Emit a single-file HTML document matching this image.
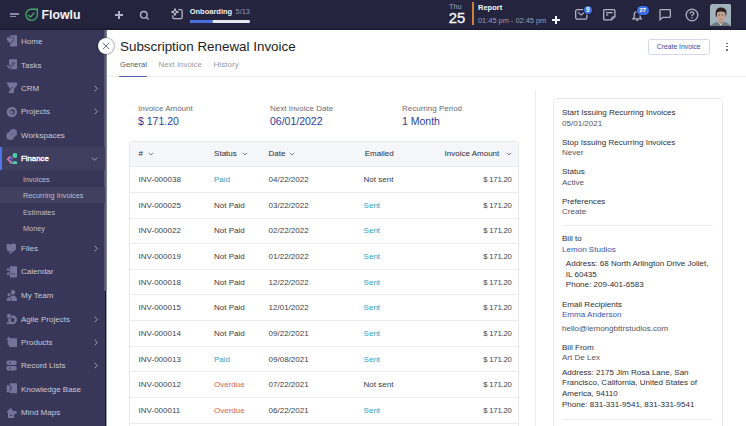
<!DOCTYPE html>
<html><head><meta charset="utf-8">
<style>
*{box-sizing:border-box;margin:0;padding:0}
html,body{width:746px;height:426px;overflow:hidden;background:#fff;font-family:"Liberation Sans",sans-serif}
.a{position:absolute;white-space:nowrap}
#top{position:absolute;left:0;top:0;width:746px;height:30px;background:linear-gradient(180deg,#24243e 0,#24243e 27.5px,#1b1b33 29px,#1b1b33 30px)}
#side{position:absolute;left:0;top:30px;width:105px;height:396px;background:#383759}
#shadow{position:absolute;left:103.5px;top:30px;width:3.5px;height:260.6px;background:linear-gradient(90deg,#4a4966,#5f5e76 30%,#64637a 70%,#b0b0bc)}
.si{position:absolute;left:0;width:105px;height:23px}
.si .t{position:absolute;left:21px;top:0;line-height:23px;font-size:8px;color:#c9c9d9}
.si .ic{position:absolute;left:6px;top:5.5px;width:11px;height:12px}
.si .ch{position:absolute;left:94px;top:8px;width:4px;height:7px}
.sub{position:absolute;left:23px;font-size:7.3px;color:#bdbdd0;line-height:16px}
.lbl{font-size:8px;color:#6b6b78}
.val{font-size:10.5px;color:#2a3e9a}
.th{font-size:8px;color:#2c2c36}
.td{font-size:8px;color:#42424c}
.rc{position:absolute;left:562px;font-size:8.05px;color:#2f2f38;white-space:nowrap;line-height:10.5px}
.rc.g{color:#555560}
.rc.b{color:#3a55b0}
</style></head><body>
<!-- TOP BAR -->
<div id="top">
  <!-- hamburger -->
  <div class="a" style="left:10px;top:13px;width:9px;height:1.6px;background:#8a89a6"></div>
  <div class="a" style="left:10px;top:15.6px;width:6px;height:1.6px;background:#8a89a6"></div>
  <!-- shield -->
  <svg class="a" style="left:25px;top:8px" width="14" height="14" viewBox="0 0 14 14">
    <path d="M12.3 1.2 V6.6 A5.7 5.7 0 0 1 6.6 12.3 A5.6 5.6 0 0 1 1 6.7 V6.4 A5.2 5.2 0 0 1 6.2 1.2 Z" fill="none" stroke="#48a866" stroke-width="1.35"/>
    <path d="M3.2 7 L5.6 9.1 L9.2 4.6" fill="none" stroke="#48a866" stroke-width="1.35"/>
  </svg>
  <div class="a" style="left:41.5px;top:7px;font-size:12.3px;font-weight:bold;color:#f4f4f8;line-height:17px">Flowlu</div>
  <!-- plus -->
  <div class="a" style="left:115px;top:14.2px;width:8px;height:1.5px;background:#b2b2c6"></div>
  <div class="a" style="left:118.2px;top:11px;width:1.5px;height:8px;background:#b2b2c6"></div>
  <!-- search -->
  <svg class="a" style="left:139px;top:10px" width="11" height="11" viewBox="0 0 11 11"><circle cx="4.8" cy="4.8" r="3.3" fill="none" stroke="#b2b2c6" stroke-width="1.4"/><path d="M7.3 7.3 L9.6 9.6" stroke="#b2b2c6" stroke-width="1.4"/></svg>
  <!-- onboarding icon -->
  <svg class="a" style="left:170px;top:8px" width="14" height="13" viewBox="0 0 14 13"><path d="M8.3 1.65 H10.9 Q12.15 1.65 12.15 2.9 V9.3 Q12.15 10.55 10.9 10.55 H4 Q2.75 10.55 2.75 9.3 V7.2" fill="none" stroke="#b4b4c8" stroke-width="1.3"/><path d="M4.95 1.2 V6.8 M2.15 4 H7.75" stroke="#b4b4c8" stroke-width="2" stroke-linecap="round"/><circle cx="4.95" cy="4" r="2.1" fill="#b4b4c8"/><circle cx="4.95" cy="4" r="0.9" fill="#24243e"/></svg>
  <div class="a" style="left:189.7px;top:6.6px;font-size:7.5px;font-weight:bold;color:#f0f0f5;line-height:10px">Onboarding</div>
  <div class="a" style="left:235.6px;top:6.6px;font-size:7.4px;color:#9a9ab4;line-height:10px">5/13</div>
  <div class="a" style="left:190px;top:20px;width:60px;height:2.5px;background:#e6e6ee;border-radius:1.25px"></div>
  <div class="a" style="left:190px;top:20px;width:23px;height:2.5px;background:#4a6ee0;border-radius:1.25px"></div>
  <!-- date -->
  <div class="a" style="left:449px;top:2px;font-size:7.4px;color:#a3a3bb;line-height:9px">Thu</div>
  <div class="a" style="left:448.8px;top:9.5px;font-size:14.8px;color:#fafafc;line-height:17px;-webkit-text-stroke:0.3px #fafafc">25</div>
  <div class="a" style="left:472px;top:2px;width:2px;height:22.5px;background:#cf7f36"></div>
  <div class="a" style="left:478px;top:2.8px;font-size:7.5px;font-weight:bold;color:#fafafc;line-height:10px">Report</div>
  <div class="a" style="left:478px;top:15.8px;font-size:7.4px;color:#9d9db6;line-height:10px">01:45 pm - 02:45 pm</div>
  <div class="a" style="left:552px;top:19.2px;width:7.5px;height:1.5px;background:#f4f4f8"></div>
  <div class="a" style="left:555px;top:16.2px;width:1.5px;height:7.5px;background:#f4f4f8"></div>
  <!-- mail -->
  <svg class="a" style="left:575px;top:9.3px" width="12.5" height="11" viewBox="0 0 12.5 11"><rect x="0.65" y="0.65" width="11.2" height="9.5" rx="1.6" fill="none" stroke="#b2b2c6" stroke-width="1.3"/><path d="M3 3.4 L6.2 5.9 L9.4 3.4" fill="none" stroke="#b2b2c6" stroke-width="1.2"/></svg>
  <div class="a" style="left:583.6px;top:5.5px;width:8.6px;height:8.6px;border-radius:50%;background:#3c6fe4;color:#fff;font-size:6.6px;font-weight:bold;text-align:center;line-height:8.6px;box-shadow:0 0 0 0.8px #1b1b31">9</div>
  <!-- notes -->
  <svg class="a" style="left:602.5px;top:9.2px" width="13" height="11.5" viewBox="0 0 13 11.5"><path d="M1.6 0.65 H10.9 Q11.9 0.65 11.9 1.6 V7.6 L8.4 10.9 H1.6 Q0.65 10.9 0.65 9.9 V1.6 Q0.65 0.65 1.6 0.65 Z" fill="none" stroke="#b2b2c6" stroke-width="1.3"/><path d="M3 3.6 H9.6 M3 5.9 H5.2" stroke="#b2b2c6" stroke-width="1.2"/><path d="M8.6 10.5 V8.7 Q8.6 7.8 9.5 7.8 H11.5" fill="none" stroke="#b2b2c6" stroke-width="1"/></svg>
  <!-- bell -->
  <svg class="a" style="left:631.5px;top:10px" width="10.5" height="11" viewBox="0 0 10.5 11"><path d="M2.2 7.8 V5 Q2.2 1.6 5.2 1.6 Q8.2 1.6 8.2 5 V7.8 L9.6 8.9 H0.8 Z" fill="none" stroke="#b2b2c6" stroke-width="1.3"/><path d="M4 10.3 H6.4" stroke="#b2b2c6" stroke-width="1.2"/></svg>
  <div class="a" style="left:636.8px;top:6px;width:12px;height:8.6px;border-radius:4.3px;background:#3c6fe4;color:#fff;font-size:6px;font-weight:bold;text-align:center;line-height:8.6px;box-shadow:0 0 0 0.8px #1b1b31">27</div>
  <!-- chat -->
  <svg class="a" style="left:658.5px;top:9px" width="12.5" height="12" viewBox="0 0 12.5 12"><path d="M1.6 0.65 H10.6 Q11.35 0.65 11.35 1.4 V7.6 Q11.35 8.35 10.6 8.35 H3.8 L1 10.8 V1.4 Q1 0.65 1.6 0.65 Z" fill="none" stroke="#b2b2c6" stroke-width="1.3"/></svg>
  <!-- help -->
  <svg class="a" style="left:685px;top:7.6px" width="14" height="14" viewBox="0 0 14 14"><circle cx="7" cy="7" r="5.8" fill="none" stroke="#b2b2c6" stroke-width="1.3"/><path d="M5.2 5.5 Q5.2 3.8 7 3.8 Q8.8 3.8 8.8 5.4 Q8.8 6.5 7 7.2 V8.3" fill="none" stroke="#b2b2c6" stroke-width="1.3"/><circle cx="7" cy="10" r="0.8" fill="#b2b2c6"/></svg>
  <!-- avatar -->
  <svg class="a" style="left:709.8px;top:3.7px" width="21.5" height="22.5" viewBox="0 0 21.5 22.5">
    <defs><clipPath id="av"><rect x="0" y="0" width="21.5" height="22.5" rx="2.5"/></clipPath></defs>
    <g clip-path="url(#av)">
    <rect width="21.5" height="22.5" fill="#a2b2bd"/>
    <path d="M1 22.5 Q2 19 7 18.2 L14.5 18.2 Q19.5 19 20.5 22.5 Z" fill="#6d7b83"/>
    <path d="M8 18 L10.8 21.5 L13.5 18 Z" fill="#e6e8ea"/>
    <path d="M8.6 15.5 H13 V18.5 L10.8 20 L8.6 18.5 Z" fill="#a4837a"/>
    <ellipse cx="10.8" cy="11.8" rx="4.3" ry="6.2" fill="#c4a291"/>
    <path d="M5.8 12.5 Q4.6 4.5 9.5 3.6 Q15 2.8 16.4 7 Q16.8 10 15.9 12.8 L15.3 8.8 Q12.5 6.8 7.2 8.2 L6.6 13 Z" fill="#2b211d"/>
    <path d="M8.3 11 H9.9 M11.7 11 H13.3" stroke="#4f3a31" stroke-width="0.8"/>
    <path d="M9.6 15.3 H12" stroke="#9a7466" stroke-width="0.6"/>
    </g>
  </svg>
</div>

<!-- SIDEBAR -->
<div id="side"></div>
<div id="shadow"></div><div class="a" style="left:104.5px;top:290.6px;width:1.6px;height:136px;background:#14142c"></div><div class="a" style="left:106px;top:290.6px;width:1px;height:136px;background:#a0a0ae"></div>
<!--SI-->
<div class="a" style="left:0;top:146.6px;width:105px;height:23.9px;background:#3f3e5e"></div>
<div class="a" style="left:0;top:146.6px;width:2px;height:23.9px;background:#4f74e8"></div>
<div class="a" style="left:0;top:187.2px;width:105px;height:15.4px;background:#41405f"></div>
<div class="si" style="top:29.8px"><svg class="ic" viewBox="0 0 11 12"><rect x="4" y="0.3" width="7" height="11.3" rx="0.8" fill="#75749a"/><path d="M0.3 4 Q0.3 1.8 2.4 1.8 Q3.6 1.8 4.4 2.8 Q5.4 1.8 6.4 2 Q8.2 2.4 7.6 4.6 Q7 6.6 4.4 8.6 Q0.3 6 0.3 4 Z" fill="#75749a" stroke="#383759" stroke-width="0.8"/></svg><div class="t" style="color:#c7c7d7;font-weight:normal">Home</div>
</div>
<div class="si" style="top:53.7px"><svg class="ic" viewBox="0 0 11 12"><rect x="3" y="0.3" width="8" height="10" rx="0.8" fill="#75749a"/><path d="M0.8 6.4 L3.2 8.8 L8.6 3.4" fill="none" stroke="#383759" stroke-width="2.6"/><path d="M0.8 6.4 L3.2 8.8 L8.6 3.4" fill="none" stroke="#75749a" stroke-width="1.3"/></svg><div class="t" style="color:#c7c7d7;font-weight:normal">Tasks</div>
</div>
<div class="si" style="top:76.7px"><svg class="ic" viewBox="0 0 11 12"><path d="M0.3 0.5 H11 V3.5 L8 7 V11 H2.5 L4 7 Z" fill="#75749a"/><path d="M2.2 9.5 L7.2 4.6" stroke="#383759" stroke-width="0.9"/></svg><div class="t" style="color:#c7c7d7;font-weight:normal">CRM</div>
<svg class="ch" viewBox="0 0 4 7"><path d="M0.7 0.7 L3.2 3.5 L0.7 6.3" fill="none" stroke="#a8a8c0" stroke-width="0.9"/></svg>
</div>
<div class="si" style="top:100.2px"><svg class="ic" viewBox="0 0 11 12"><circle cx="5.8" cy="6" r="5.2" fill="#75749a"/><circle cx="6.2" cy="5.8" r="2.6" fill="#383759"/><circle cx="5.6" cy="6.2" r="1.6" fill="#75749a"/></svg><div class="t" style="color:#c7c7d7;font-weight:normal">Projects</div>
<svg class="ch" viewBox="0 0 4 7"><path d="M0.7 0.7 L3.2 3.5 L0.7 6.3" fill="none" stroke="#a8a8c0" stroke-width="0.9"/></svg>
</div>
<div class="si" style="top:123.9px"><svg class="ic" viewBox="0 0 11 12"><circle cx="4.2" cy="7" r="3.9" fill="#75749a"/><circle cx="7.2" cy="4" r="3.9" fill="#75749a" opacity="0.9"/><rect x="5" y="4.8" width="1.4" height="1.4" fill="#383759" opacity="0.6"/></svg><div class="t" style="color:#c7c7d7;font-weight:normal">Workspaces</div>
</div>
<div class="si" style="top:147.3px"><svg class="ic" viewBox="0 0 11 12"><path d="M0.6 6.2 L4 2.8 L7 5.8 L5.6 7.2 L6.2 10.6 L4.6 10.8 L3.4 9 Z" fill="#e27c99"/><rect x="3.2" y="4.9" width="2.8" height="2.8" transform="rotate(45 4.6 6.3)" fill="#3556d6"/><circle cx="9" cy="2.4" r="2.5" fill="#4ccbac"/><path d="M6.2 10.9 Q6.2 7.9 9 7.9 Q11.4 7.9 11.4 10.9 Z" fill="#4ccbac"/></svg><div class="t" style="color:#ffffff;font-weight:normal;font-size:7.8px;-webkit-text-stroke:0.35px #fff">Finance</div>
<svg class="a" style="left:91px;top:9.5px" width="7" height="4" viewBox="0 0 7 4"><path d="M0.7 0.7 L3.5 3.2 L6.3 0.7" fill="none" stroke="#a8a8c0" stroke-width="0.9"/></svg>
</div>
<div class="si" style="top:237.3px"><svg class="ic" viewBox="0 0 11 12"><path d="M0.5 2 Q0.5 0.5 2.5 0.8 L5 1.4 Q6 0.2 8 0.6 L10 1.5 V4.5 Q10 7.5 7 8.5 L2.5 8.5 Q0.5 7.5 0.5 5 Z" fill="#75749a"/><path d="M3.5 10.8 L9.5 5.5" stroke="#75749a" stroke-width="1.2"/></svg><div class="t" style="color:#c7c7d7;font-weight:normal">Files</div>
<svg class="ch" viewBox="0 0 4 7"><path d="M0.7 0.7 L3.2 3.5 L0.7 6.3" fill="none" stroke="#a8a8c0" stroke-width="0.9"/></svg>
</div>
<div class="si" style="top:260.4px"><svg class="ic" viewBox="0 0 11 12"><rect x="3.8" y="0.3" width="7.2" height="11.3" rx="0.8" fill="#75749a"/><circle cx="2.2" cy="3.5" r="1.7" fill="#75749a" stroke="#383759" stroke-width="0.6"/><circle cx="2.2" cy="7.8" r="1.7" fill="#75749a" stroke="#383759" stroke-width="0.6"/><rect x="5" y="7.3" width="4" height="1.2" fill="#383759" opacity="0.6"/></svg><div class="t" style="color:#c7c7d7;font-weight:normal">Calendar</div>
</div>
<div class="si" style="top:284.0px"><svg class="ic" viewBox="0 0 11 12"><circle cx="7" cy="2.3" r="2.2" fill="#75749a"/><path d="M3 11 Q3 5.5 7 5.5 Q11 5.5 11 11 Z" fill="#75749a"/><circle cx="3" cy="4.5" r="1.5" fill="#75749a"/><path d="M0.2 11 Q0.2 7 3 7 Q5 7 5.5 9 V11 Z" fill="#75749a" stroke="#383759" stroke-width="0.5"/></svg><div class="t" style="color:#c7c7d7;font-weight:normal">My Team</div>
</div>
<div class="si" style="top:307.5px"><svg class="ic" viewBox="0 0 11 12"><circle cx="6.5" cy="6.8" r="4.5" fill="#75749a"/><circle cx="6.6" cy="7" r="1.9" fill="#383759"/><circle cx="3" cy="3" r="2.5" fill="#75749a" stroke="#383759" stroke-width="0.6"/><rect x="0.5" y="9.5" width="5" height="1.6" fill="#75749a"/></svg><div class="t" style="color:#c7c7d7;font-weight:normal">Agile Projects</div>
<svg class="ch" viewBox="0 0 4 7"><path d="M0.7 0.7 L3.2 3.5 L0.7 6.3" fill="none" stroke="#a8a8c0" stroke-width="0.9"/></svg>
</div>
<div class="si" style="top:330.6px"><svg class="ic" viewBox="0 0 11 12"><rect x="3.2" y="2.2" width="7.8" height="8.8" rx="0.6" fill="#75749a"/><path d="M0.3 3.6 L2.6 0.4 L5 3.6 Z" fill="#75749a"/><rect x="1.8" y="3" width="1.6" height="6" fill="#75749a"/></svg><div class="t" style="color:#c7c7d7;font-weight:normal">Products</div>
<svg class="ch" viewBox="0 0 4 7"><path d="M0.7 0.7 L3.2 3.5 L0.7 6.3" fill="none" stroke="#a8a8c0" stroke-width="0.9"/></svg>
</div>
<div class="si" style="top:354.2px"><svg class="ic" viewBox="0 0 11 12"><rect x="0.3" y="0.5" width="10.5" height="4.6" rx="2.3" fill="#75749a"/><rect x="0.3" y="6" width="10.5" height="4.6" rx="2.3" fill="#75749a"/><circle cx="4" cy="2.8" r="1" fill="#383759" opacity="0.7"/><circle cx="4" cy="8.3" r="1" fill="#383759" opacity="0.7"/></svg><div class="t" style="color:#c7c7d7;font-weight:normal">Record Lists</div>
<svg class="ch" viewBox="0 0 4 7"><path d="M0.7 0.7 L3.2 3.5 L0.7 6.3" fill="none" stroke="#a8a8c0" stroke-width="0.9"/></svg>
</div>
<div class="si" style="top:377.8px"><svg class="ic" viewBox="0 0 11 12"><rect x="4" y="0.3" width="7" height="10" rx="0.6" fill="#75749a"/><path d="M0.5 2 H4 V10.8 L3 9.5 H0.5 Z" fill="#75749a" stroke="#383759" stroke-width="0.5"/><rect x="4.5" y="2.5" width="1.5" height="5" fill="#383759" opacity="0.5"/></svg><div class="t" style="color:#c7c7d7;font-weight:normal">Knowledge Base</div>
</div>
<div class="si" style="top:401.3px"><svg class="ic" viewBox="0 0 11 12"><path d="M0.3 5.2 L4.5 1 L8.5 5.2 Z" fill="#75749a"/><rect x="2" y="5" width="6.2" height="6" fill="#75749a"/><circle cx="9" cy="5.5" r="1.8" fill="#75749a"/><rect x="4" y="8" width="2" height="1" fill="#383759"/></svg><div class="t" style="color:#c7c7d7;font-weight:normal">Mind Maps</div>
</div>
<div class="sub" style="top:171.8px">Invoices</div>
<div class="sub" style="top:188.2px">Recurring Invoices</div>
<div class="sub" style="top:204.9px">Estimates</div>
<div class="sub" style="top:221.0px">Money</div>
<!--/SI-->

<!-- MAIN -->
<div class="a" style="left:98.3px;top:38.2px;width:16px;height:16px;border-radius:50%;background:#fff;box-shadow:0 0 1.2px 0.6px rgba(10,10,30,0.55)"></div>
<svg class="a" style="left:102.3px;top:42.2px" width="8" height="8" viewBox="0 0 8 8"><path d="M0.8 0.8 L7.2 7.2 M7.2 0.8 L0.8 7.2" stroke="#6f7898" stroke-width="1"/></svg>
<div class="a" style="left:120px;top:38px;font-size:13.4px;color:#1d1d24;line-height:18px">Subscription Renewal Invoice</div>
<div class="a" style="left:120px;top:60.2px;font-size:7.6px;color:#5a5a64;line-height:10px">General</div>
<div class="a" style="left:158.5px;top:60.2px;font-size:7.9px;color:#9a9aa6;line-height:10px">Next Invoice</div>
<div class="a" style="left:213.5px;top:60.2px;font-size:8.1px;color:#9a9aa6;line-height:10px">History</div>
<div class="a" style="left:119px;top:75.6px;width:27.7px;height:1.5px;background:#4f5fa8;border-radius:1px;z-index:2"></div>
<div class="a" style="left:107px;top:76px;width:639px;height:1px;background:#f0f0f4"></div>
<div class="a" style="left:648px;top:39px;width:62px;height:15.5px;border:1px solid #d3d6e8;border-radius:2.5px"></div>
<div class="a" style="left:656.8px;top:42px;font-size:6.8px;color:#3b4a9c;line-height:9.5px">Create Invoice</div>
<div class="a" style="left:726.3px;top:42.8px;width:1.6px;height:1.6px;background:#555;border-radius:50%"></div>
<div class="a" style="left:726.3px;top:45.9px;width:1.6px;height:1.6px;background:#555;border-radius:50%"></div>
<div class="a" style="left:726.3px;top:49.1px;width:1.6px;height:1.6px;background:#555;border-radius:50%"></div>

<div class="a lbl" style="left:138px;top:104px;line-height:10px">Invoice Amount</div>
<div class="a val" style="left:138px;top:114px;line-height:14px">$ 171.20</div>
<div class="a lbl" style="left:270px;top:104px;line-height:10px">Next Invoice Date</div>
<div class="a val" style="left:270px;top:114px;line-height:14px">06/01/2022</div>
<div class="a lbl" style="left:402px;top:104px;line-height:10px">Recurring Period</div>
<div class="a val" style="left:402px;top:114px;line-height:14px">1 Month</div>

<div class="a" style="left:535px;top:90px;width:1px;height:336px;background:#ececf1"></div>

<!-- TABLE -->
<div id="tbl" class="a" style="left:129px;top:141px;width:390px;height:300px;border:1px solid #e6e8ee;border-radius:4px;overflow:hidden">
  <div class="a" style="left:0;top:0;width:390px;height:25px;background:#f5f6fa;border-bottom:1px solid #e8eaf0"></div>
</div>
<!--ROWS-->
<div class="a th" style="left:138.6px;top:148.8px;line-height:10px">#</div>
<div class="a th" style="left:214.1px;top:148.8px;line-height:10px">Status</div>
<div class="a th" style="left:268.6px;top:148.8px;line-height:10px">Date</div>
<div class="a th" style="left:364.7px;top:148.8px;line-height:10px">Emailed</div>
<div class="a th" style="left:444.6px;top:148.8px;line-height:10px">Invoice Amount</div>
<svg class="a" style="left:147.5px;top:152.3px" width="6" height="4" viewBox="0 0 6 4"><path d="M0.8 0.8 L3 3 L5.2 0.8" fill="none" stroke="#6f7392" stroke-width="0.9"/></svg>
<svg class="a" style="left:241.5px;top:152.3px" width="6" height="4" viewBox="0 0 6 4"><path d="M0.8 0.8 L3 3 L5.2 0.8" fill="none" stroke="#6f7392" stroke-width="0.9"/></svg>
<svg class="a" style="left:289px;top:152.3px" width="6" height="4" viewBox="0 0 6 4"><path d="M0.8 0.8 L3 3 L5.2 0.8" fill="none" stroke="#6f7392" stroke-width="0.9"/></svg>
<svg class="a" style="left:506px;top:152.3px" width="6" height="4" viewBox="0 0 6 4"><path d="M0.8 0.8 L3 3 L5.2 0.8" fill="none" stroke="#6f7392" stroke-width="0.9"/></svg>
<div class="a td" style="left:138.6px;top:175.2px;line-height:10px">INV-000038</div>
<div class="a td" style="left:214px;top:175.2px;line-height:10px;color:#2aa5c9">Paid</div>
<div class="a td" style="left:268.6px;top:175.2px;line-height:10px">04/22/2022</div>
<div class="a td" style="left:363.6px;top:175.2px;line-height:10px;color:#3a3a44">Not sent</div>
<div class="a td" style="left:430px;width:81.6px;text-align:right;top:175.2px;line-height:10px;font-size:7.7px;letter-spacing:-0.2px">$ 171.20</div>
<div class="a" style="left:130px;top:191.9px;width:388px;height:1px;background:#eaebf0"></div>
<div class="a td" style="left:138.6px;top:200.8px;line-height:10px">INV-000025</div>
<div class="a td" style="left:214px;top:200.8px;line-height:10px;color:#3a3a44">Not Paid</div>
<div class="a td" style="left:268.6px;top:200.8px;line-height:10px">03/22/2022</div>
<div class="a td" style="left:363.6px;top:200.8px;line-height:10px;color:#2aa5c9">Sent</div>
<div class="a td" style="left:430px;width:81.6px;text-align:right;top:200.8px;line-height:10px;font-size:7.7px;letter-spacing:-0.2px">$ 171.20</div>
<div class="a" style="left:130px;top:217.5px;width:388px;height:1px;background:#eaebf0"></div>
<div class="a td" style="left:138.6px;top:226.4px;line-height:10px">INV-000022</div>
<div class="a td" style="left:214px;top:226.4px;line-height:10px;color:#3a3a44">Not Paid</div>
<div class="a td" style="left:268.6px;top:226.4px;line-height:10px">02/22/2022</div>
<div class="a td" style="left:363.6px;top:226.4px;line-height:10px;color:#2aa5c9">Sent</div>
<div class="a td" style="left:430px;width:81.6px;text-align:right;top:226.4px;line-height:10px;font-size:7.7px;letter-spacing:-0.2px">$ 171.20</div>
<div class="a" style="left:130px;top:243.2px;width:388px;height:1px;background:#eaebf0"></div>
<div class="a td" style="left:138.6px;top:252.1px;line-height:10px">INV-000019</div>
<div class="a td" style="left:214px;top:252.1px;line-height:10px;color:#3a3a44">Not Paid</div>
<div class="a td" style="left:268.6px;top:252.1px;line-height:10px">01/22/2022</div>
<div class="a td" style="left:363.6px;top:252.1px;line-height:10px;color:#2aa5c9">Sent</div>
<div class="a td" style="left:430px;width:81.6px;text-align:right;top:252.1px;line-height:10px;font-size:7.7px;letter-spacing:-0.2px">$ 171.20</div>
<div class="a" style="left:130px;top:268.8px;width:388px;height:1px;background:#eaebf0"></div>
<div class="a td" style="left:138.6px;top:277.7px;line-height:10px">INV-000018</div>
<div class="a td" style="left:214px;top:277.7px;line-height:10px;color:#3a3a44">Not Paid</div>
<div class="a td" style="left:268.6px;top:277.7px;line-height:10px">12/22/2022</div>
<div class="a td" style="left:363.6px;top:277.7px;line-height:10px;color:#2aa5c9">Sent</div>
<div class="a td" style="left:430px;width:81.6px;text-align:right;top:277.7px;line-height:10px;font-size:7.7px;letter-spacing:-0.2px">$ 171.20</div>
<div class="a" style="left:130px;top:294.4px;width:388px;height:1px;background:#eaebf0"></div>
<div class="a td" style="left:138.6px;top:303.3px;line-height:10px">INV-000015</div>
<div class="a td" style="left:214px;top:303.3px;line-height:10px;color:#3a3a44">Not Paid</div>
<div class="a td" style="left:268.6px;top:303.3px;line-height:10px">12/01/2022</div>
<div class="a td" style="left:363.6px;top:303.3px;line-height:10px;color:#2aa5c9">Sent</div>
<div class="a td" style="left:430px;width:81.6px;text-align:right;top:303.3px;line-height:10px;font-size:7.7px;letter-spacing:-0.2px">$ 171.20</div>
<div class="a" style="left:130px;top:320.0px;width:388px;height:1px;background:#eaebf0"></div>
<div class="a td" style="left:138.6px;top:328.9px;line-height:10px">INV-000014</div>
<div class="a td" style="left:214px;top:328.9px;line-height:10px;color:#3a3a44">Not Paid</div>
<div class="a td" style="left:268.6px;top:328.9px;line-height:10px">09/22/2021</div>
<div class="a td" style="left:363.6px;top:328.9px;line-height:10px;color:#2aa5c9">Sent</div>
<div class="a td" style="left:430px;width:81.6px;text-align:right;top:328.9px;line-height:10px;font-size:7.7px;letter-spacing:-0.2px">$ 171.20</div>
<div class="a" style="left:130px;top:345.6px;width:388px;height:1px;background:#eaebf0"></div>
<div class="a td" style="left:138.6px;top:354.5px;line-height:10px">INV-000013</div>
<div class="a td" style="left:214px;top:354.5px;line-height:10px;color:#2aa5c9">Paid</div>
<div class="a td" style="left:268.6px;top:354.5px;line-height:10px">09/08/2021</div>
<div class="a td" style="left:363.6px;top:354.5px;line-height:10px;color:#2aa5c9">Sent</div>
<div class="a td" style="left:430px;width:81.6px;text-align:right;top:354.5px;line-height:10px;font-size:7.7px;letter-spacing:-0.2px">$ 171.20</div>
<div class="a" style="left:130px;top:371.3px;width:388px;height:1px;background:#eaebf0"></div>
<div class="a td" style="left:138.6px;top:380.2px;line-height:10px">INV-000012</div>
<div class="a td" style="left:214px;top:380.2px;line-height:10px;color:#d95f58">Overdue</div>
<div class="a td" style="left:268.6px;top:380.2px;line-height:10px">07/22/2021</div>
<div class="a td" style="left:363.6px;top:380.2px;line-height:10px;color:#3a3a44">Not sent</div>
<div class="a td" style="left:430px;width:81.6px;text-align:right;top:380.2px;line-height:10px;font-size:7.7px;letter-spacing:-0.2px">$ 171.20</div>
<div class="a" style="left:130px;top:396.9px;width:388px;height:1px;background:#eaebf0"></div>
<div class="a td" style="left:138.6px;top:405.8px;line-height:10px">INV-000011</div>
<div class="a td" style="left:214px;top:405.8px;line-height:10px;color:#d95f58">Overdue</div>
<div class="a td" style="left:268.6px;top:405.8px;line-height:10px">06/22/2021</div>
<div class="a td" style="left:363.6px;top:405.8px;line-height:10px;color:#2aa5c9">Sent</div>
<div class="a td" style="left:430px;width:81.6px;text-align:right;top:405.8px;line-height:10px;font-size:7.7px;letter-spacing:-0.2px">$ 171.20</div>
<div class="a" style="left:130px;top:422.5px;width:388px;height:1px;background:#eaebf0"></div>
<!--/ROWS-->

<!-- RIGHT CARD -->
<div class="a" style="left:553px;top:98px;width:169.5px;height:340px;border:1px solid #e8e9f0;border-radius:4px"></div>
<div class="a" style="left:562px;top:224.5px;width:151px;height:1px;background:#ececf1"></div>
<div class="a" style="left:562px;top:418.5px;width:151px;height:1px;background:#ececf1"></div>
<!--CARD-->
<div class="rc " style="left:562px;top:107.9px">Start Issuing Recurring Invoices</div>
<div class="rc g" style="left:562px;top:118.8px">05/01/2021</div>
<div class="rc " style="left:562px;top:137.6px">Stop Issuing Recurring Invoices</div>
<div class="rc g" style="left:562px;top:148.2px">Never</div>
<div class="rc " style="left:562px;top:167.0px">Status</div>
<div class="rc g" style="left:562px;top:177.8px">Active</div>
<div class="rc " style="left:562px;top:196.6px">Preferences</div>
<div class="rc g" style="left:562px;top:207.1px">Create</div>
<div class="rc " style="left:562px;top:234.4px">Bill to</div>
<div class="rc b" style="left:562px;top:244.5px">Lemon Studios</div>
<div class="rc " style="left:565.8px;top:259.3px">Address: 68 North Arlington Drive Joliet,</div>
<div class="rc " style="left:565.8px;top:269.9px">IL 60435</div>
<div class="rc " style="left:565.8px;top:280.4px">Phone: 209-401-6583</div>
<div class="rc " style="left:562px;top:299.9px">Email Recipients</div>
<div class="rc b" style="left:562px;top:310.4px">Emma Anderson</div>
<div class="rc g" style="left:562px;top:323.8px">hello@lemongbttrstudios.com</div>
<div class="rc " style="left:562px;top:343.0px">Bill From</div>
<div class="rc g" style="left:562px;top:353.2px">Art De Lex</div>
<div class="rc " style="left:562px;top:367.8px">Address: 2175 Jim Rosa Lane, San</div>
<div class="rc " style="left:562px;top:378.4px">Francisco, California, United States of</div>
<div class="rc " style="left:562px;top:388.9px">America, 94110</div>
<div class="rc " style="left:562px;top:399.5px">Phone: 831-331-9541, 831-331-9541</div>
<!--/CARD-->
</body></html>
